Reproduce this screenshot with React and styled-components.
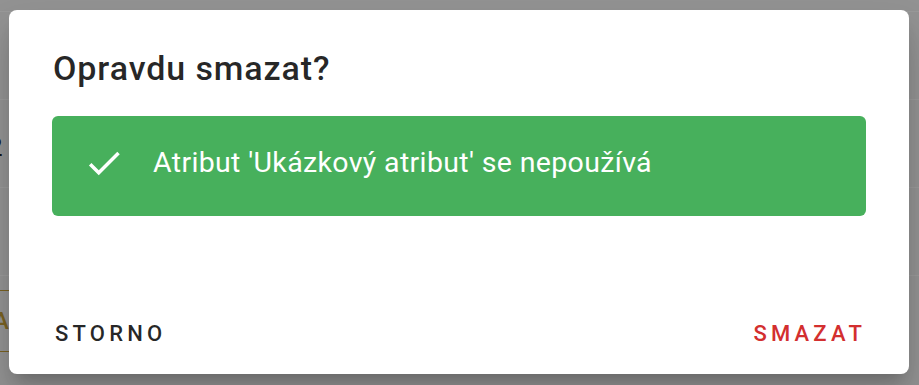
import React from 'react';
import styled, { createGlobalStyle } from 'styled-components';

const GlobalStyle = createGlobalStyle`
  html, body {
    margin: 0;
    padding: 0;
    width: 919px;
    height: 385px;
    overflow: hidden;
    font-family: Roboto, "Liberation Sans", Arial, sans-serif;
  }
`;

const Page = styled.div`
  position: relative;
  width: 919px;
  height: 385px;
  background: #f4f4f4;
  overflow: hidden;
`;

/* table rows lying behind the backdrop */
const Table = styled.div`
  display: flex;
  flex-direction: column;
  padding-top: 11px;
`;

const Row = styled.div`
  height: 87px;
  border-top: 1px solid #ffffff;
  display: flex;
  align-items: ${(p) => (p.$top ? 'flex-start' : 'center')};
  font-size: 26px;
  color: #222;
`;

const RowCell = styled.span`
  margin-left: -12px;
  margin-top: 6px;
`;

const GoldBox = styled.div`
  margin-top: 14px;
  height: 62px;
  width: 18px;
  margin-left: -8px;
  border: 1px solid #c9a23a;
  border-left: none;
  display: flex;
  align-items: flex-start;
  justify-content: flex-end;
  padding-top: 18px;
  box-sizing: border-box;
  color: #c9a23a;
  font-size: 24px;
  font-weight: 500;
  line-height: 1;
`;

const Backdrop = styled.div`
  position: absolute;
  inset: 0;
  background: rgba(0, 0, 0, 0.4);
`;

const Dialog = styled.div`
  position: absolute;
  left: 9px;
  top: 10px;
  width: 900px;
  height: 364px;
  box-sizing: border-box;
  background: #fff;
  border-radius: 8px;
  box-shadow: 0 11px 15px -7px rgba(0, 0, 0, 0.2), 0 24px 38px 3px rgba(0, 0, 0, 0.14);
  display: flex;
  flex-direction: column;
  padding: 34px 43px 18px 43px;
`;

const Title = styled.h2`
  margin: 0 0 0 1px;
  font-size: 34px;
  line-height: 48px;
  font-weight: 500;
  color: rgba(0, 0, 0, 0.85);
  letter-spacing: 0.9px;
`;

const Alert = styled.div`
  margin-top: 24px;
  height: 100px;
  box-sizing: border-box;
  border-radius: 6px;
  background: #47b05c;
  color: #fff;
  display: flex;
  align-items: center;
  padding: 0 0 6px 31px;
`;

const AlertIcon = styled.svg`
  width: 42px;
  height: 42px;
  fill: #fff;
  flex-shrink: 0;
  margin-right: 28px;
`;

const AlertText = styled.span`
  font-size: 28.5px;
  font-weight: 400;
  line-height: 1.5;
  letter-spacing: 0.35px;
`;

const Actions = styled.div`
  margin-top: auto;
  display: flex;
  justify-content: space-between;
  align-items: center;
`;

const Button = styled.button`
  background: none;
  border: none;
  padding: 10px 0 10px 3px;
  font-family: Roboto, "Liberation Sans", Arial, sans-serif;
  font-size: 22px;
  font-weight: 500;
  letter-spacing: 4.2px;
  text-transform: uppercase;
  cursor: pointer;
  color: ${(p) => (p.$danger ? '#d32f2f' : 'rgba(0, 0, 0, 0.85)')};
`;

export default function App() {
  return (
    <Page>
      <GlobalStyle />
      <Table>
        <Row />
        <Row><RowCell>2</RowCell></Row>
        <Row />
        <Row $top><GoldBox>A</GoldBox></Row>
      </Table>
      <Backdrop />
      <Dialog role="dialog">
        <Title>Opravdu smazat?</Title>
        <Alert>
          <AlertIcon viewBox="0 0 24 24">
            <path d="M9 16.17 4.83 12l-1.42 1.41L9 19 21 7l-1.41-1.41z" />
          </AlertIcon>
          <AlertText>Atribut 'Ukázkový atribut' se nepoužívá</AlertText>
        </Alert>
        <Actions>
          <Button>Storno</Button>
          <Button $danger>Smazat</Button>
        </Actions>
      </Dialog>
    </Page>
  );
}
